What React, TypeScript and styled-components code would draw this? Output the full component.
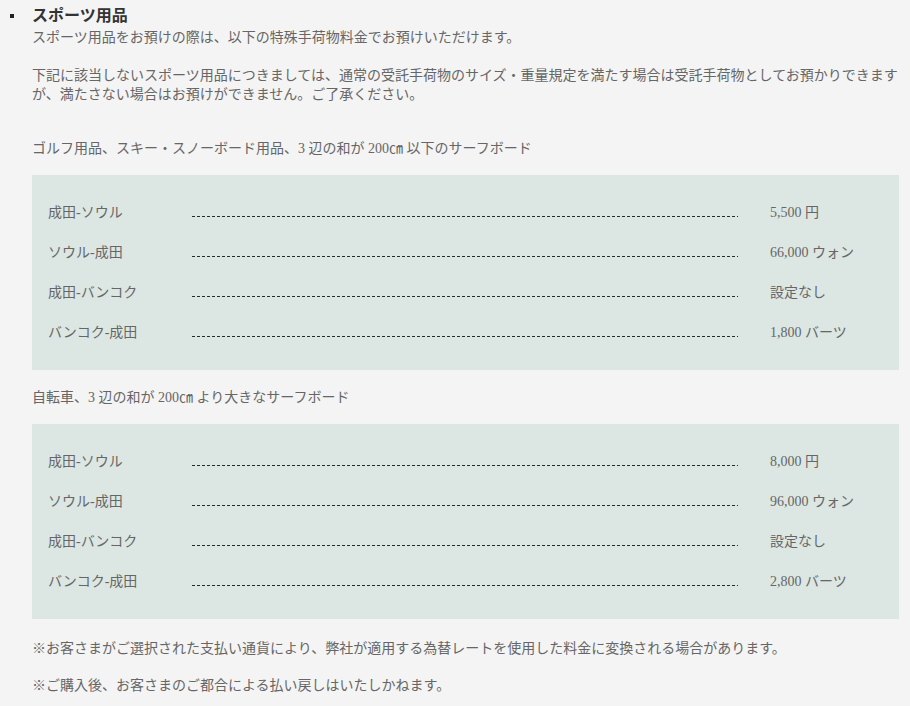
import React from "react";
import styled, { createGlobalStyle } from "styled-components";

const Global = createGlobalStyle`
  html, body {
    margin: 0;
    padding: 0;
    background: #f4f4f4;
  }
  body {
    font-family: "Liberation Serif", "Noto Sans CJK JP", serif;
    color: #666;
    font-size: 14px;
    line-height: 19px;
  }
`;

const Page = styled.div`
  padding: 5px 8px 12px 32px;
  width: 870px;
`;

const SectionItem = styled.section`
  position: relative;
`;

const Heading = styled.h2`
  margin: 0;
  font-size: 16px;
  line-height: 22px;
  font-weight: 700;
  color: #333;
  &::before {
    content: "";
    position: absolute;
    left: -22px;
    top: 9px;
    width: 4px;
    height: 4px;
    background: #222;
  }
`;

const Para = styled.p<{ $top?: number }>`
  margin: ${(p) => p.$top ?? 0}px 0 0;
  font-size: 14px;
  line-height: 19px;
`;

const Category = styled.p<{ $top: number }>`
  margin: ${(p) => p.$top}px 0 17px;
  line-height: 19px;
`;

const Box = styled.div`
  background: #dce6e2;
  margin-right: 3px;
  padding: 17px 16px 18px;
`;

const Row = styled.div`
  display: flex;
  align-items: center;
  height: 40px;
`;

const Route = styled.span`
  width: 144px;
  flex: none;
`;

const Leader = styled.span`
  flex: 1;
  height: 10px;
  background-image: repeating-linear-gradient(
    to right,
    #2a2a2a 0 3px,
    transparent 3px 5px
  );
  background-size: 100% 1px;
  background-position: left bottom;
  background-repeat: no-repeat;
`;

const Price = styled.span`
  width: 113px;
  margin-left: 32px;
  flex: none;
`;

const Note = styled.p<{ $top: number }>`
  margin: ${(p) => p.$top}px 0 0;
  line-height: 19px;
`;

type Fare = { route: string; price: string };

const golf: Fare[] = [
  { route: "成田-ソウル", price: "5,500 円" },
  { route: "ソウル-成田", price: "66,000 ウォン" },
  { route: "成田-バンコク", price: "設定なし" },
  { route: "バンコク-成田", price: "1,800 バーツ" },
];

const bike: Fare[] = [
  { route: "成田-ソウル", price: "8,000 円" },
  { route: "ソウル-成田", price: "96,000 ウォン" },
  { route: "成田-バンコク", price: "設定なし" },
  { route: "バンコク-成田", price: "2,800 バーツ" },
];

const FareTable = ({ rows }: { rows: Fare[] }) => (
  <Box>
    {rows.map((r) => (
      <Row key={r.route}>
        <Route>{r.route}</Route>
        <Leader />
        <Price>{r.price}</Price>
      </Row>
    ))}
  </Box>
);

export default function App() {
  return (
    <>
      <Global />
      <Page>
        <SectionItem>
          <Heading>スポーツ用品</Heading>
          <Para $top={1}>
            スポーツ用品をお預けの際は、以下の特殊手荷物料金でお預けいただけます。
          </Para>
          <Para $top={19}>
            下記に該当しないスポーツ用品につきましては、通常の受託手荷物のサイズ・重量規定を満たす場合は受託手荷物としてお預かりできますが、満たさない場合はお預けができません。ご了承ください。
          </Para>
          <Category $top={35}>
            ゴルフ用品、スキー・スノーボード用品、3 辺の和が 200㎝ 以下のサーフボード
          </Category>
          <FareTable rows={golf} />
          <Category $top={18}>自転車、3 辺の和が 200㎝ より大きなサーフボード</Category>
          <FareTable rows={bike} />
          <Note $top={20}>
            ※お客さまがご選択された支払い通貨により、弊社が適用する為替レートを使用した料金に変換される場合があります。
          </Note>
          <Note $top={18}>※ご購入後、お客さまのご都合による払い戻しはいたしかねます。</Note>
        </SectionItem>
      </Page>
    </>
  );
}
